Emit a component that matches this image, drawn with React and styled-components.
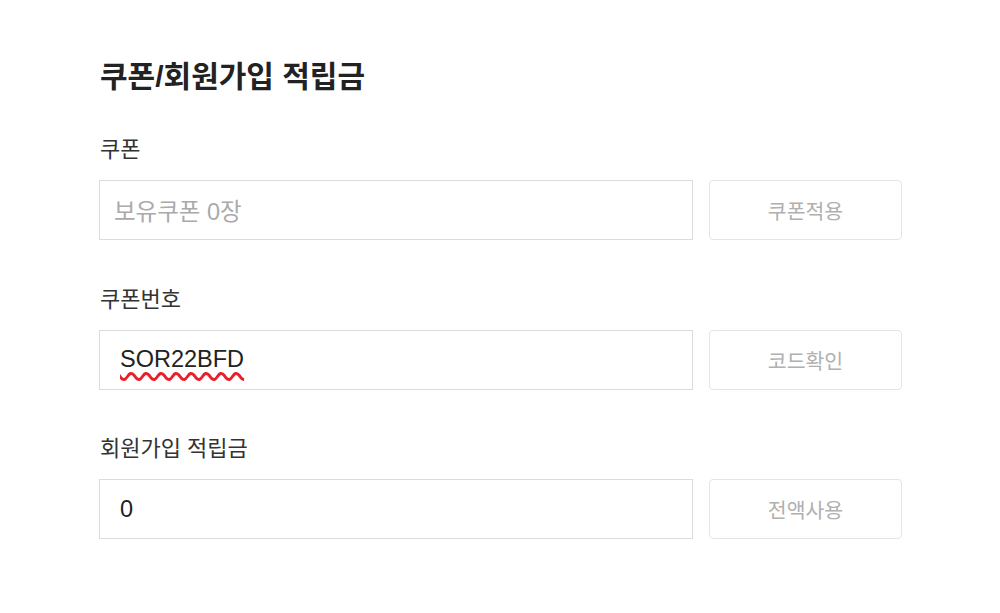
import React from "react"
import styled, { createGlobalStyle } from "styled-components"

const GlobalStyle = createGlobalStyle`
  body {
    margin: 0;
    background: #fff;
    font-family: "Liberation Sans", "Noto Sans CJK KR", sans-serif;
  }
`

const fields = [
  { label: "쿠폰", text: "보유쿠폰 0장", placeholder: true, action: "쿠폰적용" },
  { label: "쿠폰번호", text: "SOR22BFD", misspelled: true, action: "코드확인" },
  { label: "회원가입 적립금", text: "0", action: "전액사용" },
]

const App = () => (
  <>
    <GlobalStyle />
    <Section>
      <Title>쿠폰/회원가입 적립금</Title>
      <Groups>
        {fields.map((f) => (
          <Group key={f.label}>
            <Label>{f.label}</Label>
            <Row>
              <Field $placeholder={f.placeholder}>
                {f.misspelled ? <Squiggle>{f.text}</Squiggle> : f.text}
              </Field>
              <Button type="button">{f.action}</Button>
            </Row>
          </Group>
        ))}
      </Groups>
    </Section>
  </>
)

const Section = styled.section`
  padding: 57px 0 0 99px;
  width: 803px;
`

const Title = styled.h2`
  margin: 0 0 38px 1px;
  font-size: 30px;
  line-height: 40px;
  font-weight: 700;
  color: #222;
`

const Groups = styled.div`
  display: flex;
  flex-direction: column;
  gap: 44.5px;
`

const Group = styled.div`
  display: flex;
  flex-direction: column;
  gap: 15px;
`

const Label = styled.div`
  margin-left: 1px;
  font-size: 22px;
  line-height: 30px;
  color: #333;
`

const Row = styled.div`
  display: flex;
  gap: 16px;
`

const Field = styled.div`
  box-sizing: border-box;
  flex: 0 0 594px;
  height: 60px;
  display: flex;
  align-items: center;
  padding: 0 ${(p) => (p.$placeholder ? "14px" : "20px")};
  border: 1px solid #dcdcdc;
  font-size: 23.5px;
  color: ${(p) => (p.$placeholder ? "#aaa" : "#222")};
`

const Squiggle = styled.span`
  text-decoration: underline wavy #e8202a;
  text-decoration-thickness: 3px;
  text-underline-offset: 5px;
  text-decoration-skip-ink: none;
`

const Button = styled.button`
  box-sizing: border-box;
  width: 193px;
  height: 60px;
  border: 1px solid #e4e4e4;
  border-radius: 4px;
  background: #fff;
  font-family: inherit;
  font-size: 20.5px;
  color: #b0b0b0;
  cursor: pointer;
`

export default App
